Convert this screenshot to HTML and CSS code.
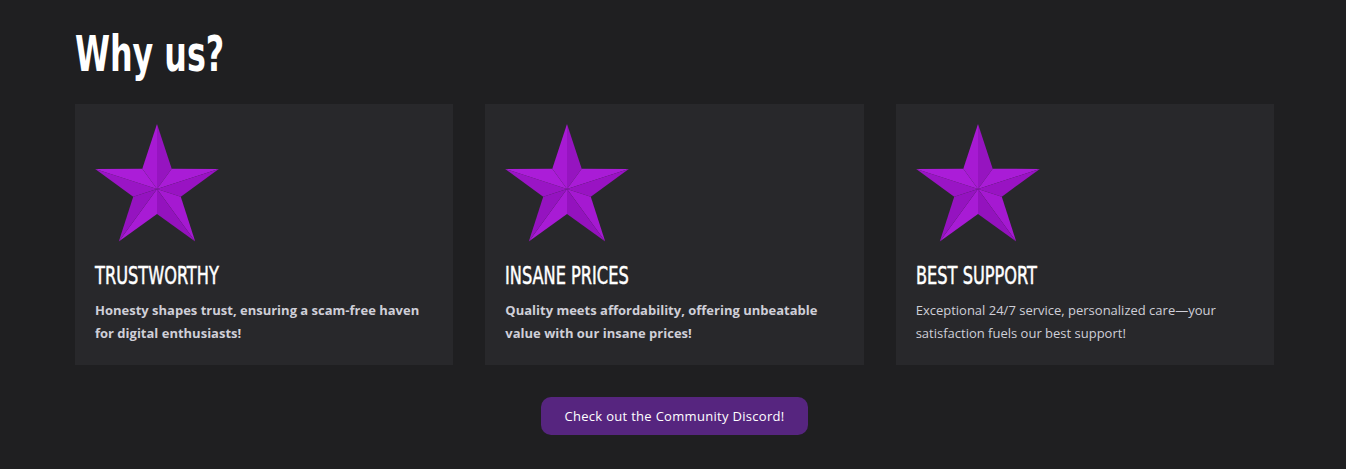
FILE: index.html
```html
<!DOCTYPE html>
<html lang="en">
<head>
<meta charset="utf-8">
<title>Why us?</title>
<link rel="stylesheet" href="styles.css">
</head>
<body>
<section class="why">
  <h1 class="why-title"><span class="narrow">Why us?</span></h1>
  <div class="cards">
    <div class="card">
      <svg class="star" viewBox="0 0 124 119" width="124" height="119" aria-hidden="true">
        <polygon points="62,0 47.3,44.8 62,65" fill="#a71ad3"/>
        <polygon points="62,0 76.7,44.8 62,65" fill="#9614c0"/>
        <polygon points="123.8,44.9 76.7,44.8 62,65" fill="#a91cd6"/>
        <polygon points="123.8,44.9 85.8,72.7 62,65" fill="#9913c3"/>
        <polygon points="100.2,117.6 85.8,72.7 62,65" fill="#a519d1"/>
        <polygon points="100.2,117.6 62,90 62,65" fill="#9412be"/>
        <polygon points="23.8,117.6 62,90 62,65" fill="#a81bd5"/>
        <polygon points="23.8,117.6 38.2,72.7 62,65" fill="#9513c0"/>
        <polygon points="0.2,44.9 38.2,72.7 62,65" fill="#9a15c5"/>
        <polygon points="0.2,44.9 47.3,44.8 62,65" fill="#ab1dd8"/>
      </svg>
      <h2 class="card-title"><span class="narrow">TRUSTWORTHY</span></h2>
      <p class="card-text card-text-bold">Honesty shapes trust, ensuring a scam-free haven for digital enthusiasts!</p>
    </div>
    <div class="card">
      <svg class="star" viewBox="0 0 124 119" width="124" height="119" aria-hidden="true">
        <polygon points="62,0 47.3,44.8 62,65" fill="#a71ad3"/>
        <polygon points="62,0 76.7,44.8 62,65" fill="#9614c0"/>
        <polygon points="123.8,44.9 76.7,44.8 62,65" fill="#a91cd6"/>
        <polygon points="123.8,44.9 85.8,72.7 62,65" fill="#9913c3"/>
        <polygon points="100.2,117.6 85.8,72.7 62,65" fill="#a519d1"/>
        <polygon points="100.2,117.6 62,90 62,65" fill="#9412be"/>
        <polygon points="23.8,117.6 62,90 62,65" fill="#a81bd5"/>
        <polygon points="23.8,117.6 38.2,72.7 62,65" fill="#9513c0"/>
        <polygon points="0.2,44.9 38.2,72.7 62,65" fill="#9a15c5"/>
        <polygon points="0.2,44.9 47.3,44.8 62,65" fill="#ab1dd8"/>
      </svg>
      <h2 class="card-title"><span class="narrow">INSANE PRICES</span></h2>
      <p class="card-text card-text-bold">Quality meets affordability, offering unbeatable value with our insane prices!</p>
    </div>
    <div class="card">
      <svg class="star" viewBox="0 0 124 119" width="124" height="119" aria-hidden="true">
        <polygon points="62,0 47.3,44.8 62,65" fill="#a71ad3"/>
        <polygon points="62,0 76.7,44.8 62,65" fill="#9614c0"/>
        <polygon points="123.8,44.9 76.7,44.8 62,65" fill="#a91cd6"/>
        <polygon points="123.8,44.9 85.8,72.7 62,65" fill="#9913c3"/>
        <polygon points="100.2,117.6 85.8,72.7 62,65" fill="#a519d1"/>
        <polygon points="100.2,117.6 62,90 62,65" fill="#9412be"/>
        <polygon points="23.8,117.6 62,90 62,65" fill="#a81bd5"/>
        <polygon points="23.8,117.6 38.2,72.7 62,65" fill="#9513c0"/>
        <polygon points="0.2,44.9 38.2,72.7 62,65" fill="#9a15c5"/>
        <polygon points="0.2,44.9 47.3,44.8 62,65" fill="#ab1dd8"/>
      </svg>
      <h2 class="card-title"><span class="narrow">BEST SUPPORT</span></h2>
      <p class="card-text">Exceptional 24/7 service, personalized care—your satisfaction fuels our best support!</p>
    </div>
  </div>
  <div class="cta">
    <a class="cta-button" href="#">Check out the Community Discord!</a>
  </div>
</section>
</body>
</html>
```
FILE: styles.css
```css
html, body {
  margin: 0;
  padding: 0;
  background: #1f1f21;
}

body {
  font-family: "Open Sans", "Liberation Sans", sans-serif;
  color: #d0d0d8;
}

.why {
  padding: 23px 72px 34px 75px;
}

.narrow {
  display: inline-block;
  transform-origin: left center;
  white-space: nowrap;
}

.why-title {
  margin: 0 0 17px;
  font-family: "DejaVu Sans", sans-serif;
  font-stretch: condensed;
  font-weight: 700;
  font-size: 49px;
  line-height: 64px;
  height: 64px;
  color: #ffffff;
}

.why-title .narrow {
  transform: scaleX(0.72);
}

.cards {
  display: grid;
  grid-template-columns: repeat(3, 1fr);
  gap: 32px;
}

.card {
  background: #28282b;
  padding: 20px;
  height: 261px;
  box-sizing: border-box;
}

.star {
  display: block;
}

.card-title {
  margin: 19px 0 9px;
  font-family: "DejaVu Sans", sans-serif;
  font-stretch: condensed;
  font-weight: 400;
  font-size: 25px;
  line-height: 28px;
  height: 28px;
  color: #ffffff;
  -webkit-text-stroke: 0.5px #ffffff;
}

.card-title .narrow {
  transform: scaleX(0.72);
}

.card-text {
  margin: 0;
  font-size: 13px;
  line-height: 22.5px;
  color: #cfcfd8;
}

.card-text-bold {
  font-weight: 700;
}

.cta {
  display: flex;
  justify-content: center;
  padding-top: 32px;
}

.cta-button {
  display: flex;
  align-items: center;
  justify-content: center;
  width: 267px;
  height: 38px;
  border-radius: 10px;
  background: #56257f;
  color: #ffffff;
  font-size: 13px;
  letter-spacing: 0.3px;
  text-decoration: none;
}
```
